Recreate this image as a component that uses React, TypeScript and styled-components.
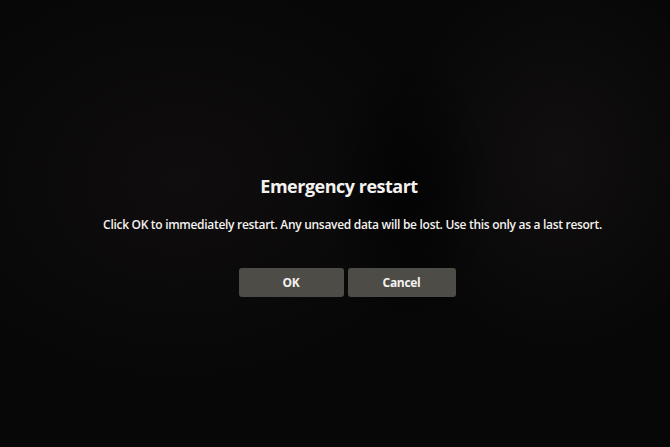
import styled, { createGlobalStyle } from 'styled-components';

const GlobalStyle = createGlobalStyle`
  html, body {
    margin: 0;
    padding: 0;
    background: #080707;
  }
`;

const Screen = styled.div`
  width: 670px;
  height: 447px;
  overflow: hidden;
  display: flex;
  flex-direction: column;
  align-items: center;
  padding: 172px 0 0 24px;
  box-sizing: border-box;
  font-family: 'Open Sans', 'Noto Sans', sans-serif;
  color: #f4f2f0;
  background:
    radial-gradient(ellipse 120px 200px at 410px 190px, rgba(0, 0, 0, 0.6), transparent 70%),
    radial-gradient(ellipse 220px 260px at 560px 160px, #110f0f, transparent 75%),
    radial-gradient(ellipse 360px 280px at 180px 180px, #0f0d0d, transparent 75%),
    #080707;
`;

const Title = styled.h1`
  margin: 0 16px 0 0;
  font-size: 18px;
  font-weight: 700;
  letter-spacing: -0.5px;
  line-height: 28px;
`;

const Message = styled.p`
  margin: 16px 0 0 11px;
  font-size: 12px;
  font-weight: 600;
  letter-spacing: -0.3px;
  line-height: 18px;
`;

const Actions = styled.div`
  display: flex;
  gap: 4px;
  margin-top: 34px;
`;

const Button = styled.button<{ $wide?: boolean }>`
  width: ${({ $wide }) => ($wide ? '108px' : '105px')};
  height: 29px;
  border: none;
  border-radius: 3px;
  background: #4e4c47;
  color: #f4f2f0;
  font-family: inherit;
  font-size: 12px;
  font-weight: 700;
  letter-spacing: -0.3px;
  cursor: pointer;
`;

export default function App() {
  return (
    <>
      <GlobalStyle />
      <Screen>
        <Title>Emergency restart</Title>
        <Message>
          Click OK to immediately restart. Any unsaved data will be lost. Use this only as a last resort.
        </Message>
        <Actions>
          <Button>OK</Button>
          <Button $wide>Cancel</Button>
        </Actions>
      </Screen>
    </>
  );
}
